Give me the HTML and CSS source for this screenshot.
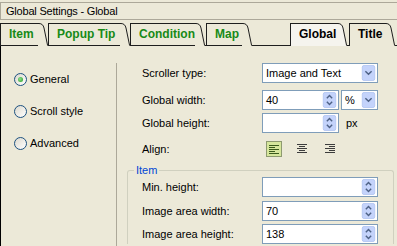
FILE: index.html
```html
<!DOCTYPE html>
<html lang="en">
<head>
    <meta charset="UTF-8">
    <title>Global Settings - Global</title>
    <link rel="stylesheet" href="styles.css">
</head>
<body>
    <div class="titlebar">Global Settings - Global</div>

    <div class="tabs">
        <div class="tab w-item"><span class="face">Item</span><svg class="slant" viewBox="0 0 10 23"><path class="fill" d="M0 0.5 H1 Q5 0.5 6 5 L9.5 23 H0 Z"/><path class="edge" d="M0 0.5 H1 Q5 0.5 6 5 L9.5 22"/></svg></div>
        <div class="tab w-popup"><span class="face">Popup Tip</span><svg class="slant" viewBox="0 0 10 23"><path class="fill" d="M0 0.5 H1 Q5 0.5 6 5 L9.5 23 H0 Z"/><path class="edge" d="M0 0.5 H1 Q5 0.5 6 5 L9.5 22"/></svg></div>
        <div class="tab w-condition"><span class="face">Condition</span><svg class="slant" viewBox="0 0 10 23"><path class="fill" d="M0 0.5 H1 Q5 0.5 6 5 L9.5 23 H0 Z"/><path class="edge" d="M0 0.5 H1 Q5 0.5 6 5 L9.5 22"/></svg></div>
        <div class="tab w-map"><span class="face">Map</span><svg class="slant" viewBox="0 0 10 23"><path class="fill" d="M0 0.5 H1 Q5 0.5 6 5 L9.5 23 H0 Z"/><path class="edge" d="M0 0.5 H1 Q5 0.5 6 5 L9.5 22"/></svg></div>
        <div class="tab w-global active"><span class="face">Global</span><svg class="slant" viewBox="0 0 10 23"><path class="fill" d="M0 0.5 H1 Q5 0.5 6 5 L9.5 23 H0 Z"/><path class="edge" d="M0 0.5 H1 Q5 0.5 6 5 L9.5 22"/></svg></div>
        <div class="tab w-title dark"><span class="face">Title</span><svg class="slant" viewBox="0 0 10 23"><path class="fill" d="M0 0.5 H1 Q5 0.5 6 5 L9.5 23 H0 Z"/><path class="edge" d="M0 0.5 H1 Q5 0.5 6 5 L9.5 22"/></svg></div>
    </div>

    <div class="panel">
        <div class="side">
            <div class="radio checked"><span class="circle"></span>General</div>
            <div class="radio"><span class="circle"></span>Scroll style</div>
            <div class="radio"><span class="circle"></span>Advanced</div>
        </div>

        <div class="main">
            <div class="row r1">
                <span class="label">Scroller type:</span>
                <div class="box w-wide">
                    <span class="value">Image and Text</span>
                    <svg class="btn" viewBox="0 0 15 18"><rect x="0.5" y="0.5" width="14" height="17" rx="2"/><path d="M4 7 L7.5 10.5 L11 7"/></svg>
                </div>
            </div>
            <div class="row r2">
                <span class="label">Global width:</span>
                <div class="box w-num">
                    <span class="value">40</span>
                    <svg class="btn" viewBox="0 0 15 18"><rect x="0.5" y="0.5" width="14" height="17" rx="2"/><path d="M4.5 7 L7.5 4 L10.5 7"/><path d="M4.5 11 L7.5 14 L10.5 11"/></svg>
                </div>
                <div class="box w-unit">
                    <span class="value">%</span>
                    <svg class="btn" viewBox="0 0 15 18"><rect x="0.5" y="0.5" width="14" height="17" rx="2"/><path d="M4 7 L7.5 10.5 L11 7"/></svg>
                </div>
            </div>
            <div class="row r3">
                <span class="label">Global height:</span>
                <div class="box w-num">
                    <span class="value"></span>
                    <svg class="btn" viewBox="0 0 15 18"><rect x="0.5" y="0.5" width="14" height="17" rx="2"/><path d="M4.5 7 L7.5 4 L10.5 7"/><path d="M4.5 11 L7.5 14 L10.5 11"/></svg>
                </div>
                <span class="unit">px</span>
            </div>
            <div class="row r4">
                <span class="label">Align:</span>
                <div class="aligns">
                    <svg class="align on" viewBox="0 0 16 16"><rect x="0.5" y="0.5" width="15" height="15"/><path d="M3 4.5 H13 M3 6.5 H9 M3 8.5 H13 M3 10.5 H9 M3 12.5 H13"/></svg>
                    <svg class="align" viewBox="0 0 16 16"><path d="M3 3.5 H13 M5 5.5 H11 M3 7.5 H13 M5 9.5 H11 M3 11.5 H13"/></svg>
                    <svg class="align" viewBox="0 0 16 16"><path d="M3 3.5 H13 M7 5.5 H13 M3 7.5 H13 M7 9.5 H13 M3 11.5 H13"/></svg>
                </div>
            </div>

            <fieldset class="group">
                <legend>Item</legend>
                <div class="row g1">
                    <span class="label">Min. height:</span>
                    <div class="box w-wide">
                        <span class="value"></span>
                        <svg class="btn" viewBox="0 0 15 18"><rect x="0.5" y="0.5" width="14" height="17" rx="2"/><path d="M4.5 7 L7.5 4 L10.5 7"/><path d="M4.5 11 L7.5 14 L10.5 11"/></svg>
                    </div>
                </div>
                <div class="row g2">
                    <span class="label">Image area width:</span>
                    <div class="box w-wide">
                        <span class="value">70</span>
                        <svg class="btn" viewBox="0 0 15 18"><rect x="0.5" y="0.5" width="14" height="17" rx="2"/><path d="M4.5 7 L7.5 4 L10.5 7"/><path d="M4.5 11 L7.5 14 L10.5 11"/></svg>
                    </div>
                </div>
                <div class="row g3">
                    <span class="label">Image area height:</span>
                    <div class="box w-wide">
                        <span class="value">138</span>
                        <svg class="btn" viewBox="0 0 15 18"><rect x="0.5" y="0.5" width="14" height="17" rx="2"/><path d="M4.5 7 L7.5 4 L10.5 7"/><path d="M4.5 11 L7.5 14 L10.5 11"/></svg>
                    </div>
                </div>
            </fieldset>
        </div>
    </div>
</body>
</html>
```

FILE: styles.css
```css
* {
    margin: 0;
    padding: 0;
    box-sizing: border-box;
    font-family: "Liberation Sans", Arial, sans-serif;
}

body {
    background-color: #ece9d8;
    width: 397px;
    height: 246px;
    overflow: hidden;
    font-size: 11px;
    color: #000000;
}

/* 标题栏 */
.titlebar {
    margin-top: 2px;
    height: 18px;
    border: 1px solid #aca899;
    border-right: none;
    padding: 1px 0 0 5px;
    line-height: 15px;
    letter-spacing: -0.2px;
}

/* 选项卡 */
.tabs {
    display: flex;
    margin-top: 3px;
    height: 23px;
    border-bottom: 1px solid #1e1e1e;
}

.tab {
    display: flex;
    height: 22px;
}

.tab .face {
    flex: 1;
    border-left: 1px solid #1e1e1e;
    border-top: 1px solid #1e1e1e;
    padding-left: 8px;
    line-height: 21px;
    font-size: 12px;
    font-weight: bold;
    color: #178a17;
    background-color: #ece9d8;
}

.tab .slant {
    width: 10px;
    height: 23px;
    flex-shrink: 0;
}

.tab .slant .fill {
    fill: #ece9d8;
}

.tab .slant .edge {
    fill: none;
    stroke: #1e1e1e;
    stroke-width: 1;
}

.w-item { width: 48px; }
.w-popup { width: 82px; }
.w-condition { width: 74px; }
.w-map { width: 46px; margin-left: 2px; }
.w-global { width: 57px; margin-left: 38px; }
.w-title { width: 46px; margin-left: 2px; }

.tab.active,
.tab.dark {
    height: 23px;
}

.tab.active .face,
.tab.dark .face {
    color: #000000;
}

.tab.active .face {
    background-color: #f5f4ee;
}

.tab.active .slant .fill {
    fill: #f5f4ee;
}

/* 内容区 */
.panel {
    display: flex;
    height: 200px;
    border-left: 1px solid #000000;
    overflow: hidden;
}

.side {
    width: 116px;
    margin-top: 17px;
    border-right: 1px solid #aca899;
    padding: 10px 0 0 13px;
}

.radio {
    display: flex;
    align-items: center;
    height: 13px;
    margin-bottom: 19px;
    line-height: 13px;
}

.radio .circle {
    width: 13px;
    height: 13px;
    border: 1px solid #1c5180;
    border-radius: 50%;
    margin-right: 3px;
    background: linear-gradient(135deg, #dcd9cd, #ffffff);
    display: flex;
    align-items: center;
    justify-content: center;
}

.radio.checked .circle::after {
    content: "";
    width: 5px;
    height: 5px;
    border-radius: 50%;
    background: radial-gradient(circle at 40% 40%, #8fe08f, #1c9a1c);
}

.main {
    flex: 1;
    padding-top: 17px;
}

.row {
    display: flex;
    align-items: center;
    height: 20px;
    padding-left: 25px;
}

.r2 { margin-top: 7px; }
.r3 { margin-top: 3px; }
.r4 { margin-top: 8px; height: 16px; }

.label {
    width: 120px;
    flex-shrink: 0;
}

.box {
    display: flex;
    align-items: center;
    height: 20px;
    border: 1px solid #7f9db9;
    background-color: #ffffff;
    padding: 1px;
}

.box .value {
    flex: 1;
    padding-left: 2px;
}

.box .btn {
    width: 15px;
    height: 16px;
}

.box .btn rect {
    fill: #c4d3fb;
    stroke: #b2c5f2;
}

.box .btn path {
    fill: none;
    stroke: #4d6185;
    stroke-width: 1.6;
}

.w-wide { width: 116px; }
.w-num { width: 77px; }
.w-unit { width: 37px; margin-left: 2px; }

.unit {
    margin-left: 7px;
}

.aligns {
    display: flex;
    gap: 12px;
    margin-left: 4px;
}

.align {
    width: 16px;
    height: 16px;
}

.align path {
    stroke: #3c3c3c;
    stroke-width: 1;
}

.align.on rect {
    fill: #d6e69c;
    stroke: #8e9a70;
}

.align.on path {
    stroke: #3b5a1c;
}

/* 分组框 */
.group {
    margin: 7px 3px 0 10px;
    border: 1px solid #d0d0bf;
    border-bottom: none;
    border-radius: 3px 3px 0 0;
    padding: 0;
}

.group legend {
    margin-left: 6px;
    padding: 0 2px;
    line-height: 13px;
    color: #0046d5;
}

.group .row {
    padding-left: 14px;
}

.g2 { margin-top: 4px; }
.g3 { margin-top: 3px; }
```
